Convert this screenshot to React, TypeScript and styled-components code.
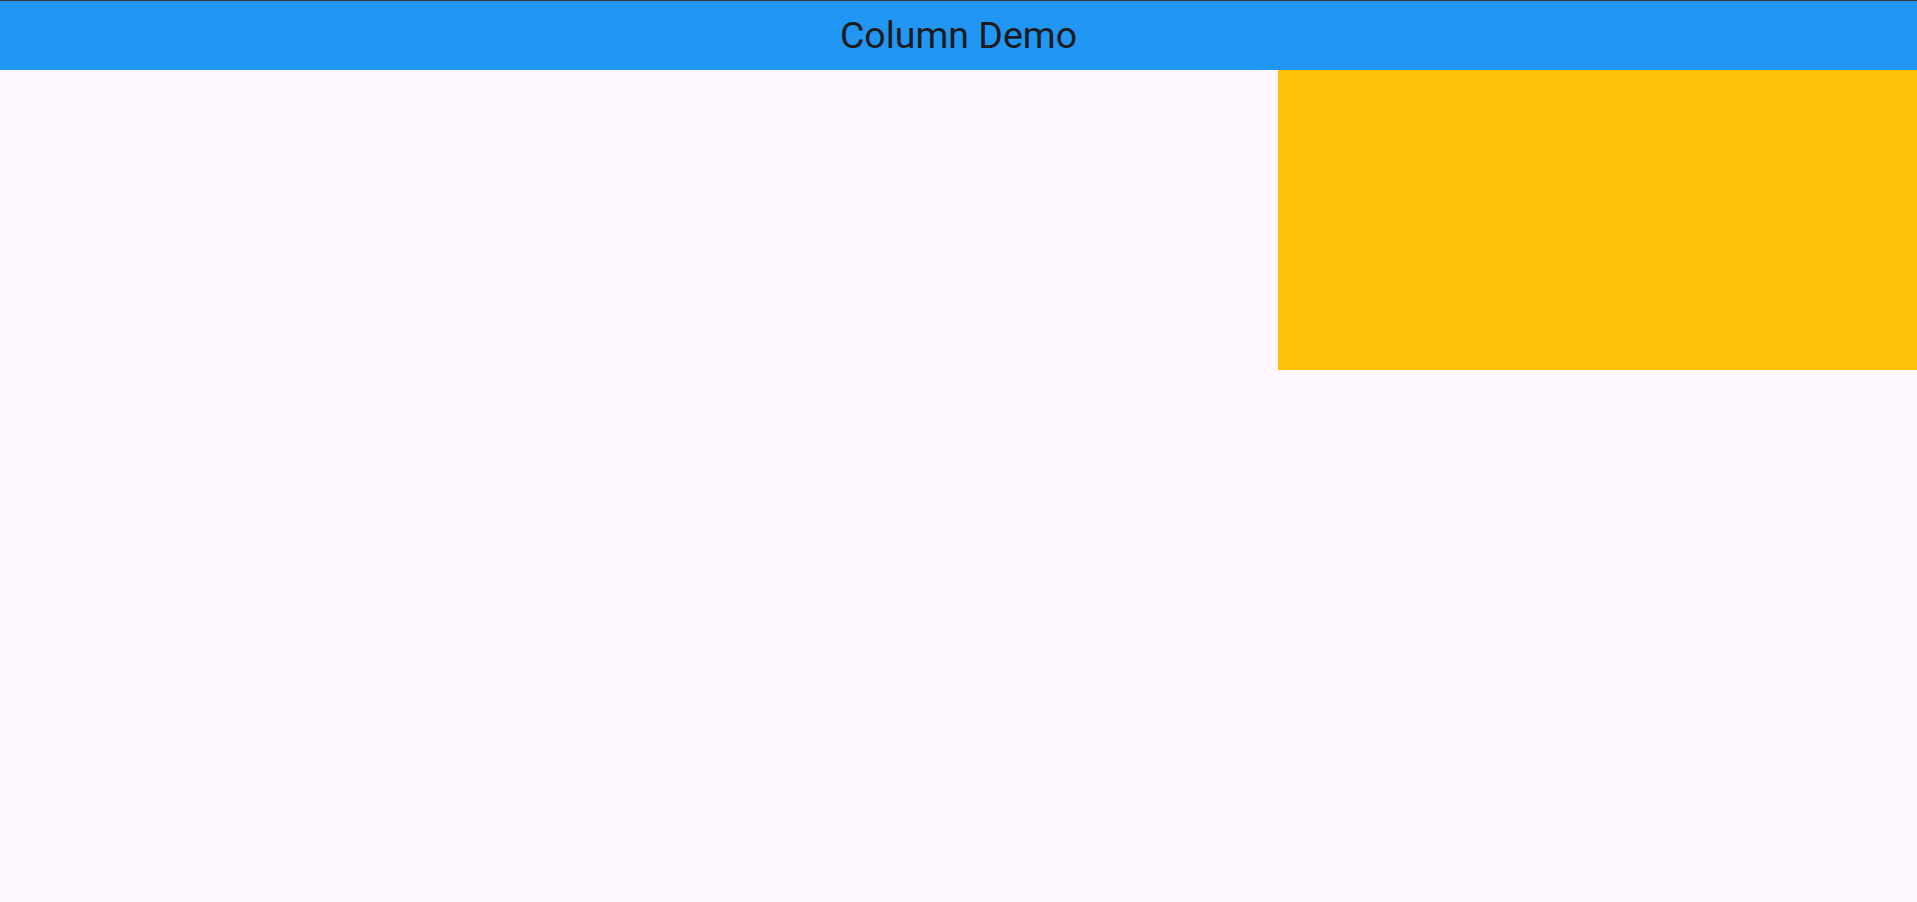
import styled, { createGlobalStyle } from 'styled-components';

const GlobalStyle = createGlobalStyle`
  html, body {
    margin: 0;
    padding: 0;
    background: #fef7ff;
  }

  body {
    font-family: Roboto, "Noto Sans", sans-serif;
  }
`;

const Page = styled.div`
  display: flex;
  flex-direction: column;
  min-height: 100vh;
  border-top: 1px solid #3a3a3a;
  box-sizing: border-box;
  background: #fef7ff;
`;

const AppBar = styled.header`
  display: flex;
  align-items: center;
  justify-content: center;
  height: 69px;
  padding-bottom: 2px;
  box-sizing: border-box;
  background: #2196f3;
`;

const Title = styled.h1`
  margin: 0;
  font-size: 37.5px;
  font-weight: 400;
  color: #1d1b20;
`;

const Body = styled.main`
  display: flex;
  justify-content: flex-end;
`;

const Block = styled.div<{ $color: string }>`
  width: 639px;
  height: 300px;
  background: ${(p) => p.$color};
`;

export default function App() {
  return (
    <>
      <GlobalStyle />
      <Page>
        <AppBar>
          <Title>Column Demo</Title>
        </AppBar>
        <Body>
          <Block $color="#ffc107" />
        </Body>
      </Page>
    </>
  );
}
